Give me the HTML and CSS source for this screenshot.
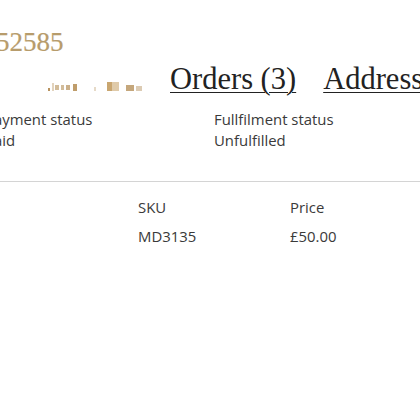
FILE: index.html
```html
<!DOCTYPE html>
<html>
<head>
<meta charset="utf-8">
<link rel="stylesheet" href="styles.css">
</head>
<body>
<div class="page">
  <h1 class="title">52585</h1>
  <nav class="tabs">
    <span class="blur" aria-hidden="true">
      <i class="b1"></i><i class="b2"></i><i class="b3"></i><i class="b4"></i><i class="b5"></i><i class="b6"></i><i class="b7"></i><i class="b8"></i><i class="b9"></i><i class="b10"></i><i class="b11"></i>
    </span>
    <a class="tab" href="#">Orders (3)</a>
    <a class="tab" href="#">Address</a>
  </nav>
  <section class="status">
    <div class="col">
      <div class="label">Payment status</div>
      <div class="value">Paid</div>
    </div>
    <div class="col">
      <div class="label">Fullfilment status</div>
      <div class="value">Unfulfilled</div>
    </div>
  </section>
  <hr class="divider">
  <section class="table">
    <div class="row">
      <div class="cell"></div>
      <div class="cell">SKU</div>
      <div class="cell">Price</div>
    </div>
    <div class="row">
      <div class="cell"></div>
      <div class="cell">MD3135</div>
      <div class="cell">£50.00</div>
    </div>
  </section>
</div>
</body>
</html>
```

FILE: styles.css
```css
html, body {
  margin: 0;
  padding: 0;
  background: #fff;
  overflow: hidden;
}
.page {
  width: 420px;
  height: 420px;
  overflow: hidden;
  font-family: "Open Sans", "Noto Sans", sans-serif;
  color: #3a3a3a;
}
.title {
  margin: 27px 0 0 -4px;
  font-family: "Liberation Serif", serif;
  font-weight: 400;
  font-size: 27px;
  line-height: 30px;
  color: #b79c6c;
  white-space: nowrap;
  -webkit-text-stroke: 0.2px #b79c6c;
}
.tabs {
  display: flex;
  align-items: center;
  margin: 3px 0 0 48px;
  white-space: nowrap;
  height: 38px;
}
.tab {
  font-family: "Liberation Serif", serif;
  font-size: 30.5px;
  line-height: 38px;
  color: #222;
  text-decoration: underline;
  text-decoration-thickness: 1px;
  text-underline-offset: 3px;
  margin-right: 27px;
}
.blur {
  display: flex;
  align-items: flex-end;
  width: 95px;
  height: 10px;
  margin: 14px 28px 0 0;
  filter: blur(0.4px);
}
.blur i { display: block; flex: none; }
.blur .b1 { width: 2px; height: 3px; background: #b89360; }
.blur .b2 { width: 2px; height: 8px; margin-left: 2px; background: #e2d3bd; }
.blur .b3 { width: 4px; height: 5px; margin-left: 1px; margin-bottom: 1px; background: #d2bc9a; }
.blur .b4 { width: 3px; height: 5px; margin-left: 2px; margin-bottom: 1px; background: #d2bc9a; }
.blur .b5 { width: 4px; height: 5px; margin-left: 2px; margin-bottom: 1px; background: #cbb08a; }
.blur .b6 { width: 4px; height: 7px; margin-left: 3px; background: #bf9d6b; }
.blur .b7 { width: 2px; height: 4px; margin-left: 17px; background: #e6dac8; }
.blur .b8 { width: 5px; height: 9px; margin-left: 11px; background: #c9a670; }
.blur .b9 { width: 7px; height: 9px; margin-left: 0; background: #dfcaa9; }
.blur .b10 { width: 8px; height: 6px; margin-left: 7px; background: #c5a77c; }
.blur .b11 { width: 6px; height: 5px; margin-left: 2px; background: #dccbb3; }
.status {
  display: flex;
  margin: 11px 0 0 -15px;
}
.col { width: 229px; flex: none; }
.label, .value {
  font-size: 14.9px;
  line-height: 21px;
  white-space: nowrap;
}
.divider {
  margin: 30px 0 0 0;
  border: 0;
  border-top: 1px solid #d4d4d4;
  height: 0;
}
.table {
  margin: 10px 0 0 -14px;
}
.row {
  display: flex;
  height: 29px;
  align-items: center;
}
.cell {
  width: 152px;
  flex: none;
  font-size: 14.9px;
  white-space: nowrap;
}
```
